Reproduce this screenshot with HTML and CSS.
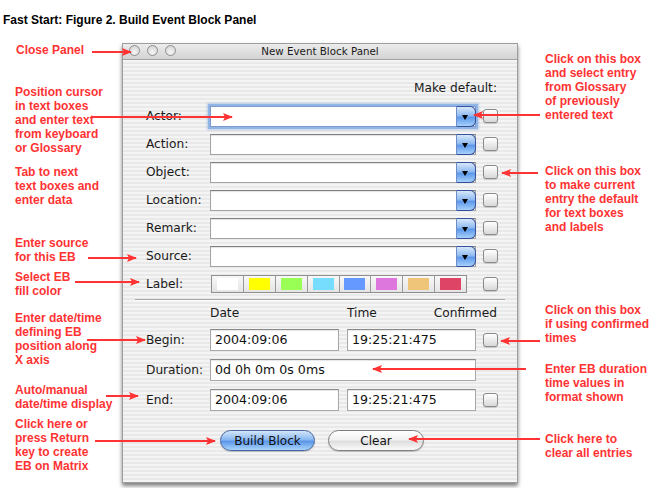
FILE: index.html
```html
<!DOCTYPE html>
<html>
<head>
<meta charset="UTF-8">
<title>Build Event Block Panel</title>
<link rel="stylesheet" href="styles.css">
</head>
<body>
<div class="page">
<h1 class="fig-title">Fast Start: Figure 2. Build Event Block Panel</h1>
<div class="figure">
  <div class="notes notes-left">
    <p class="note note-close">Close Panel</p>
    <p class="note note-cursor">Position cursor<br>in text boxes<br>and enter text<br>from keyboard<br>or Glossary</p>
    <p class="note note-tab">Tab to next<br>text boxes and<br>enter data</p>
    <p class="note note-source">Enter source<br>for this EB</p>
    <p class="note note-color">Select EB<br>fill color</p>
    <p class="note note-begin">Enter date/time<br>defining EB<br>position along<br>X axis</p>
    <p class="note note-auto">Auto/manual<br>date/time display</p>
    <p class="note note-build">Click here or<br>press Return<br>key to create<br>EB on Matrix</p>
  </div>

  <div class="window">
    <div class="titlebar">
      <div class="lights"><span></span><span></span><span></span></div>
      <div class="wintitle">New Event Block Panel</div>
    </div>
    <div class="panel">
      <div class="make-default">Make default:</div>

      <div class="row"><label>Actor:</label><div class="combo focus"><div class="combo-text"></div><div class="combo-btn"></div></div><span class="check"></span></div>
      <div class="row"><label>Action:</label><div class="combo"><div class="combo-text"></div><div class="combo-btn"></div></div><span class="check"></span></div>
      <div class="row"><label>Object:</label><div class="combo"><div class="combo-text"></div><div class="combo-btn"></div></div><span class="check"></span></div>
      <div class="row"><label>Location:</label><div class="combo"><div class="combo-text"></div><div class="combo-btn"></div></div><span class="check"></span></div>
      <div class="row"><label>Remark:</label><div class="combo"><div class="combo-text"></div><div class="combo-btn"></div></div><span class="check"></span></div>
      <div class="row"><label>Source:</label><div class="combo"><div class="combo-text"></div><div class="combo-btn"></div></div><span class="check"></span></div>
      <div class="row"><label>Label:</label>
        <div class="swatches">
          <span class="sw"><i class="c-white"></i></span>
          <span class="sw"><i class="c-yellow"></i></span>
          <span class="sw"><i class="c-green"></i></span>
          <span class="sw"><i class="c-cyan"></i></span>
          <span class="sw"><i class="c-blue"></i></span>
          <span class="sw"><i class="c-pink"></i></span>
          <span class="sw"><i class="c-tan"></i></span>
          <span class="sw"><i class="c-red"></i></span>
        </div>
        <span class="check"></span></div>

      <div class="sep"></div>

      <div class="heads"><span class="h-date">Date</span><span class="h-time">Time</span><span class="h-conf">Confirmed</span></div>
      <div class="trow"><label>Begin:</label><div class="field half">2004:09:06</div><div class="field half second">19:25:21:475</div><span class="check"></span></div>
      <div class="trow"><label>Duration:</label><div class="field full">0d 0h 0m 0s 0ms</div></div>
      <div class="trow"><label>End:</label><div class="field half">2004:09:06</div><div class="field half second">19:25:21:475</div><span class="check"></span></div>

      <div class="buttons">
        <button class="btn btn-default">Build Block</button>
        <button class="btn">Clear</button>
      </div>
    </div>
  </div>

  <div class="notes notes-right">
    <p class="note note-glossary">Click on this box<br>and select entry<br>from Glossary<br>of previously<br>entered text</p>
    <p class="note note-default">Click on this box<br>to make current<br>entry the default<br>for text boxes<br>and labels</p>
    <p class="note note-confirm">Click on this box<br>if using confirmed<br>times</p>
    <p class="note note-duration">Enter EB duration<br>time values in<br>format shown</p>
    <p class="note note-clear">Click here to<br>clear all entries</p>
  </div>
</div>

<svg class="arrows" width="649" height="488" viewBox="0 0 649 488">
  <defs>
    <marker id="head" viewBox="0 0 10 8" refX="9" refY="4" markerWidth="11" markerHeight="8" markerUnits="userSpaceOnUse" orient="auto">
      <path d="M0 0 L10 4 L0 8 L2 4 Z" fill="#ff3333"/>
    </marker>
  </defs>
  <g stroke="#ff3333" stroke-width="2" marker-end="url(#head)">
    <line x1="92" y1="52" x2="131" y2="52"/>
    <line x1="92" y1="117" x2="232" y2="117"/>
    <line x1="88" y1="258" x2="136" y2="258"/>
    <line x1="75" y1="282" x2="139" y2="282"/>
    <line x1="87" y1="340" x2="145" y2="340"/>
    <line x1="106" y1="396" x2="138" y2="396"/>
    <line x1="95" y1="441" x2="215" y2="441"/>
    <line x1="540" y1="115" x2="474" y2="115"/>
    <line x1="538" y1="173" x2="502" y2="173"/>
    <line x1="540" y1="341" x2="501" y2="341"/>
    <line x1="526" y1="369" x2="373" y2="369"/>
    <line x1="540" y1="439" x2="409" y2="439"/>
  </g>
</svg>
</div>
</body>
</html>
```

FILE: styles.css
```css
body{
    margin: 0;
    background: #fff;
    font-family: "DejaVu Sans", sans-serif;
}
.page{
    position: relative;
    width: 649px;
    height: 488px;
    overflow: hidden;
}
.fig-title{
    margin: 0;
    padding: 13px 0 0 3px;
    height: 27px;
    font-family: "Liberation Sans", Arial, sans-serif;
    font-size: 12px;
    line-height: 14px;
    font-weight: bold;
    color: #000;
}
.figure{
    display: flex;
    align-items: flex-start;
}

/* red callout text */
.notes{
    box-sizing: border-box;
}
.notes-left{
    width: 122px;
    padding-left: 15px;
}
.notes-right{
    flex: 1;
    padding-left: 27px;
}
.note{
    margin: 0;
    font-family: "Liberation Sans", Arial, sans-serif;
    font-size: 12px;
    line-height: 14px;
    font-weight: bold;
    color: #ff3333;
    white-space: nowrap;
}
.note-close{ margin-top: 3px; padding-left: 1px; }
.note-cursor{ margin-top: 28px; }
.note-tab{ margin-top: 10px; }
.note-source{ margin-top: 29px; }
.note-color{ margin-top: 6px; }
.note-begin{ margin-top: 13px; }
.note-auto{ margin-top: 16px; }
.note-build{ margin-top: 6px; }
.note-glossary{ margin-top: 12px; }
.note-default{ margin-top: 42px; }
.note-confirm{ margin-top: 69px; }
.note-duration{ margin-top: 17px; }
.note-clear{ margin-top: 28px; }

/* the aqua window */
.window{
    box-sizing: border-box;
    width: 396px;
    height: 440px;
    margin-top: 3px;
    border: 1px solid #9d9d9d;
    background: repeating-linear-gradient(to bottom, #f4f4f4 0, #f4f4f4 2px, #e9e9e9 2px, #e9e9e9 4px);
    box-shadow: 0 3px 4px rgba(0,0,0,0.5);
}
.titlebar{
    position: relative;
    box-sizing: border-box;
    height: 16px;
    border-bottom: 1px solid #a3a3a3;
    background: linear-gradient(#ececec, #d3d3d3);
}
.lights{
    display: flex;
    gap: 7px;
    padding: 1px 0 0 6px;
}
.lights span{
    box-sizing: border-box;
    width: 11px;
    height: 11px;
    border-radius: 50%;
    border: 1px solid #8e8e8e;
    background: radial-gradient(circle at 50% 70%, #f6f6f6, #cfcfcf);
}
.wintitle{
    position: absolute;
    left: 0;
    right: 0;
    top: 0;
    text-align: center;
    font-size: 10.3px;
    line-height: 14px;
    color: #1a1a1a;
}
.panel{
    padding: 20px 19px 0 23px;
    font-size: 12.2px;
    color: #1a1a1a;
}
.make-default{
    height: 16px;
    line-height: 16px;
    text-align: right;
    padding-right: 1px;
    margin-bottom: 6px;
}
.row, .trow{
    display: flex;
    align-items: center;
    height: 28px;
}
.trow{
    height: 30px;
}
.row label, .trow label{
    width: 64px;
    flex: none;
}
.combo{
    display: flex;
    box-sizing: border-box;
    width: 266px;
    height: 21px;
    border: 1px solid #a3a3a3;
    border-top-color: #808080;
    background: #fff;
    box-shadow: inset 0 1px 1px rgba(0,0,0,0.12);
}
.combo.focus{
    box-shadow: 0 0 0 2px #93b5e6, 0 0 2px 3px rgba(120,160,220,0.45);
    border-color: #7c9cd0;
}
.combo-text{
    flex: 1;
}
.combo-btn{
    position: relative;
    width: 18px;
    margin: -1px -1px -1px 0;
    border: 1px solid #34519b;
    border-left-color: #6d8cc8;
    border-radius: 0 6px 6px 0;
    background: linear-gradient(#d8e8fb 0%, #8fbaf0 45%, #5e98ea 55%, #a6d1fb 100%);
}
.combo-btn::after{
    content: "";
    position: absolute;
    left: 5px;
    top: 8px;
    border-left: 3.5px solid transparent;
    border-right: 3.5px solid transparent;
    border-top: 5px solid #000;
}
.check{
    box-sizing: border-box;
    width: 15px;
    height: 14px;
    margin-left: auto;
    border: 1px solid #8a8a8a;
    border-radius: 3px;
    background: linear-gradient(#ffffff, #d9d9d9);
    box-shadow: 0 1px 1px rgba(0,0,0,0.15);
}
.swatches{
    display: flex;
    box-sizing: border-box;
    width: 256px;
    height: 18px;
    margin-left: 1px;
    border: 1px solid #8f8f8f;
}
.sw{
    flex: 1;
    display: flex;
    align-items: center;
    justify-content: center;
    border-right: 1px solid #9a9a9a;
    background: linear-gradient(#f8f8f8, #e4e4e4);
}
.sw:last-child{
    border-right: none;
}
.sw i{
    width: 21px;
    height: 12px;
}
.c-white{ background: #ffffff; }
.c-yellow{ background: #ffff00; }
.c-green{ background: #99ff55; }
.c-cyan{ background: #77ddff; }
.c-blue{ background: #6699ff; }
.c-pink{ background: #dd77dd; }
.c-tan{ background: #efc57a; }
.c-red{ background: #dd4466; }

.sep{
    height: 1px;
    margin: 1px -7px 0 -11px;
    background: #a6a6a6;
    border-bottom: 1px solid #fdfdfd;
}
.heads{
    display: flex;
    align-items: center;
    height: 24px;
    padding-left: 64px;
}
.h-date{
    width: 137px;
}
.h-conf{
    margin-left: auto;
    padding-right: 1px;
}
.field{
    box-sizing: border-box;
    height: 22px;
    padding-left: 4px;
    line-height: 20px;
    font-size: 12.6px;
    white-space: nowrap;
    border: 1px solid #a8a8a8;
    border-top-color: #8a8a8a;
    background: #fff;
    box-shadow: inset 0 1px 1px rgba(0,0,0,0.1);
    color: #111;
}
.half{
    width: 129px;
}
.second{
    margin-left: 8px;
}
.full{
    width: 266px;
}
.buttons{
    display: flex;
    justify-content: center;
    gap: 13px;
    margin-top: 15px;
}
.btn{
    box-sizing: border-box;
    width: 96px;
    height: 21px;
    padding: 0;
    border: 1px solid #7d7d7d;
    border-radius: 11px;
    font-family: "DejaVu Sans", sans-serif;
    font-size: 12px;
    color: #111;
    background: linear-gradient(#ffffff 0%, #f1f1f1 45%, #dedede 55%, #fafafa 100%);
    box-shadow: 0 1px 1px rgba(0,0,0,0.2);
}
.btn-default{
    width: 95px;
    border-color: #46659e;
    background: linear-gradient(#d4e6fb 0%, #8ab8f1 45%, #5d97e9 55%, #a9d4fc 100%);
}
.arrows{
    position: absolute;
    left: 0;
    top: 0;
    pointer-events: none;
}
```
